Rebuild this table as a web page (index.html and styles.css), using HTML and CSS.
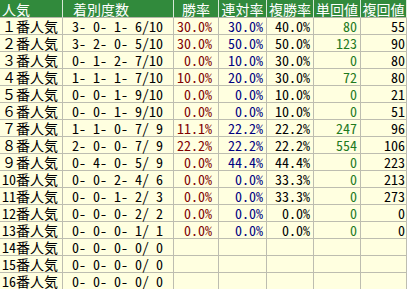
FILE: index.html
```html
<!DOCTYPE html>
<html lang="ja">
<head>
<meta charset="utf-8">
<link rel="stylesheet" href="styles.css">
</head>
<body>
<div class="tbl">
  <div class="h h-pop">人気</div><div class="h h-rec"><span class="hw"> </span>着別度数</div><div class="h">勝率</div><div class="h">連対率</div><div class="h">複勝率</div><div class="h">単回値</div><div class="h">複回値</div>

  <div class="c pop">１番人気</div><div class="c rec"> 3- 0- 1- 6/10</div><div class="c win">30.0%</div><div class="c ren">30.0%</div><div class="c fuk">40.0%</div><div class="c tan">80</div><div class="c fkv">55</div>
  <div class="c pop">２番人気</div><div class="c rec"> 3- 2- 0- 5/10</div><div class="c win">30.0%</div><div class="c ren">50.0%</div><div class="c fuk">50.0%</div><div class="c tan">123</div><div class="c fkv">90</div>
  <div class="c pop">３番人気</div><div class="c rec"> 0- 1- 2- 7/10</div><div class="c win">0.0%</div><div class="c ren">10.0%</div><div class="c fuk">30.0%</div><div class="c tan">0</div><div class="c fkv">80</div>
  <div class="c pop">４番人気</div><div class="c rec"> 1- 1- 1- 7/10</div><div class="c win">10.0%</div><div class="c ren">20.0%</div><div class="c fuk">30.0%</div><div class="c tan">72</div><div class="c fkv">80</div>
  <div class="c pop">５番人気</div><div class="c rec"> 0- 0- 1- 9/10</div><div class="c win">0.0%</div><div class="c ren">0.0%</div><div class="c fuk">10.0%</div><div class="c tan">0</div><div class="c fkv">21</div>
  <div class="c pop">６番人気</div><div class="c rec"> 0- 0- 1- 9/10</div><div class="c win">0.0%</div><div class="c ren">0.0%</div><div class="c fuk">10.0%</div><div class="c tan">0</div><div class="c fkv">51</div>
  <div class="c pop">７番人気</div><div class="c rec"> 1- 1- 0- 7/ 9</div><div class="c win">11.1%</div><div class="c ren">22.2%</div><div class="c fuk">22.2%</div><div class="c tan">247</div><div class="c fkv">96</div>
  <div class="c pop">８番人気</div><div class="c rec"> 2- 0- 0- 7/ 9</div><div class="c win">22.2%</div><div class="c ren">22.2%</div><div class="c fuk">22.2%</div><div class="c tan">554</div><div class="c fkv">106</div>
  <div class="c pop">９番人気</div><div class="c rec"> 0- 4- 0- 5/ 9</div><div class="c win">0.0%</div><div class="c ren">44.4%</div><div class="c fuk">44.4%</div><div class="c tan">0</div><div class="c fkv">223</div>
  <div class="c pop"><span class="hw">10</span>番人気</div><div class="c rec"> 0- 0- 2- 4/ 6</div><div class="c win">0.0%</div><div class="c ren">0.0%</div><div class="c fuk">33.3%</div><div class="c tan">0</div><div class="c fkv">213</div>
  <div class="c pop"><span class="hw">11</span>番人気</div><div class="c rec"> 0- 0- 1- 2/ 3</div><div class="c win">0.0%</div><div class="c ren">0.0%</div><div class="c fuk">33.3%</div><div class="c tan">0</div><div class="c fkv">273</div>
  <div class="c pop"><span class="hw">12</span>番人気</div><div class="c rec"> 0- 0- 0- 2/ 2</div><div class="c win">0.0%</div><div class="c ren">0.0%</div><div class="c fuk">0.0%</div><div class="c tan">0</div><div class="c fkv">0</div>
  <div class="c pop"><span class="hw">13</span>番人気</div><div class="c rec"> 0- 0- 0- 1/ 1</div><div class="c win">0.0%</div><div class="c ren">0.0%</div><div class="c fuk">0.0%</div><div class="c tan">0</div><div class="c fkv">0</div>
  <div class="c pop"><span class="hw">14</span>番人気</div><div class="c rec"> 0- 0- 0- 0/ 0</div><div class="c win"></div><div class="c ren"></div><div class="c fuk"></div><div class="c tan"></div><div class="c fkv"></div>
  <div class="c pop"><span class="hw">15</span>番人気</div><div class="c rec"> 0- 0- 0- 0/ 0</div><div class="c win"></div><div class="c ren"></div><div class="c fuk"></div><div class="c tan"></div><div class="c fkv"></div>
  <div class="c pop"><span class="hw">16</span>番人気</div><div class="c rec"> 0- 0- 0- 0/ 0</div><div class="c win"></div><div class="c ren"></div><div class="c fuk"></div><div class="c tan"></div><div class="c fkv"></div>
</div>
</body>
</html>
```

FILE: styles.css
```css
html, body {
  margin: 0;
  padding: 0;
  background: #ffffff;
}

.tbl {
  display: grid;
  grid-template-columns: 63px 111px 45px 48px 47px 47px 46px;
  grid-template-rows: 18px;
  grid-auto-rows: 17px;
  width: 407px;
  font-family: "Noto Sans CJK JP", sans-serif;
  font-size: 14px;
  line-height: 16px;
  white-space: pre;
}

.hw {
  font-feature-settings: "hwid" 1;
}

.h {
  box-sizing: border-box;
  background: #318a3c;
  color: #ffffff;
  border-right: 1px solid #d8e8d8;
  border-bottom: 1px solid #b5b5a8;
  text-align: center;
  padding-top: 1px;
}

.h-pop {
  text-align: left;
  padding-left: 2px;
}

.h-rec {
  text-align: left;
  padding-left: 3px;
}

.c {
  box-sizing: border-box;
  background: #ffffe0;
  border-right: 1px solid #bdbdb0;
  border-bottom: 1px solid #bdbdb0;
  color: #000000;
  text-align: right;
  padding-right: 3px;
  font-feature-settings: "hwid" 1;
}

.pop {
  text-align: left;
  padding-left: 2px;
  font-feature-settings: normal;
}

.rec {
  text-align: left;
  padding-left: 2px;
}

.win {
  color: #800000;
  padding-right: 6px;
}

.ren {
  color: #000080;
  padding-right: 3px;
}

.fuk {
  padding-right: 3px;
}

.tan {
  color: #1f7a1f;
  padding-right: 3px;
}

.fkv {
  padding-right: 1px;
}
```
